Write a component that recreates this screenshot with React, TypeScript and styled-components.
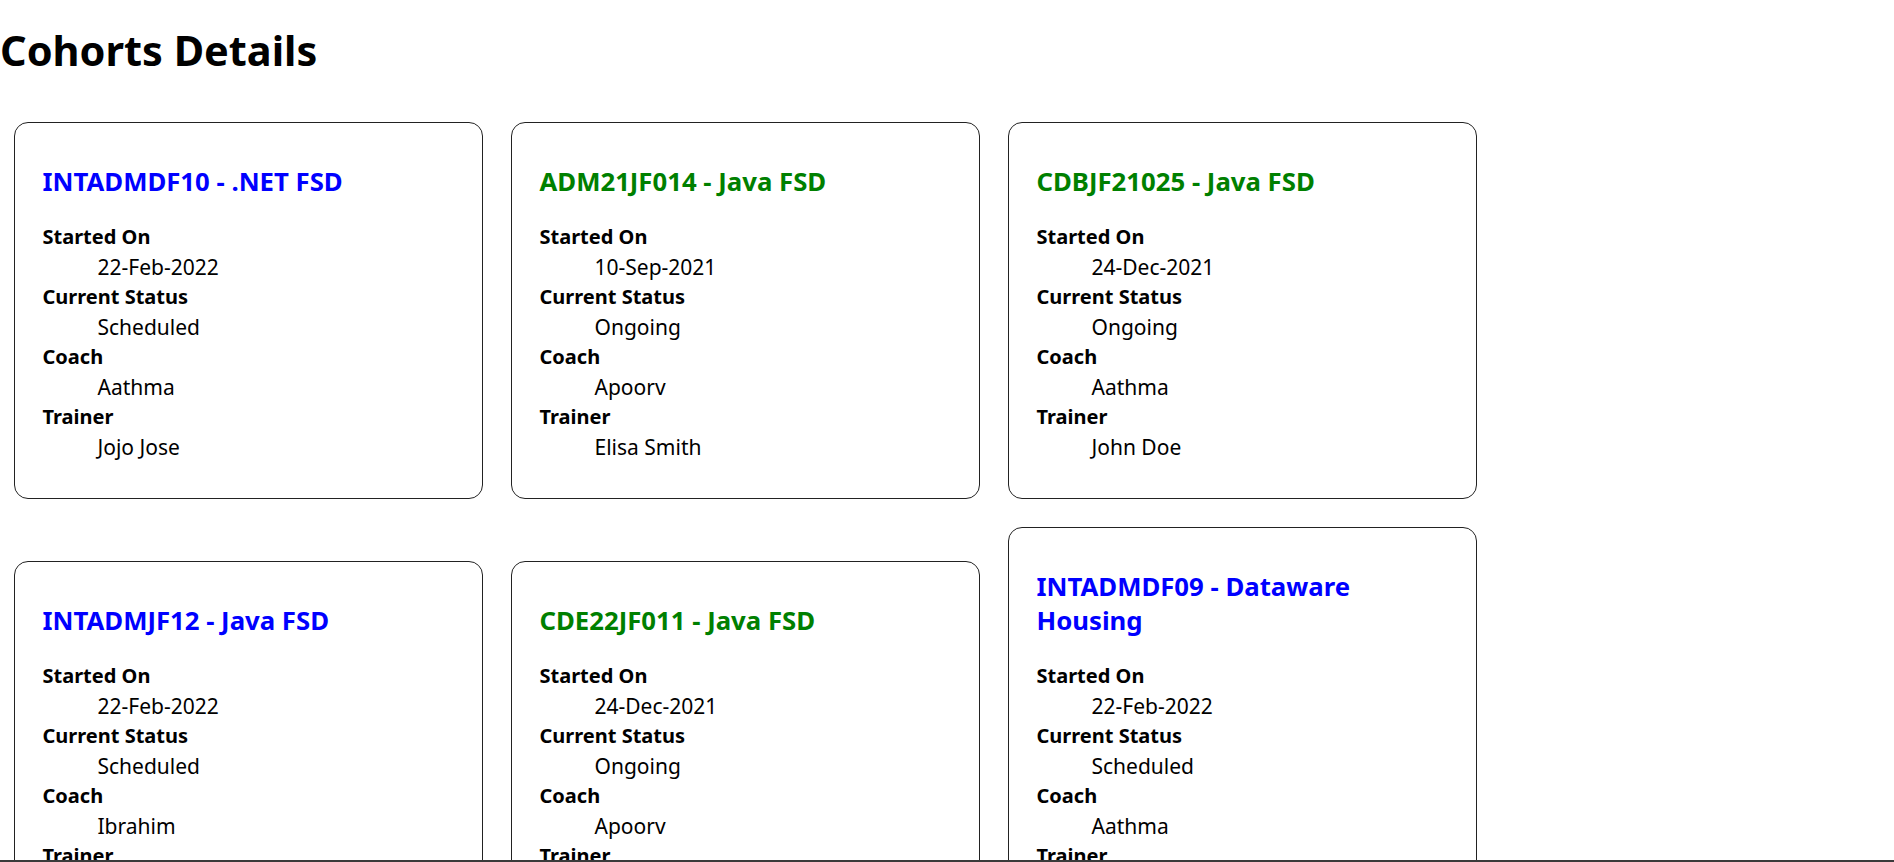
import React from 'react';
import styled, { createGlobalStyle } from 'styled-components';

const GlobalStyle = createGlobalStyle`
  body {
    margin: 0;
    background: #fff;
    color: #000;
    font-family: "Noto Sans", "Open Sans", sans-serif;
    font-size: 22px;
  }
`;

const Page = styled.div`
  >h1 {
    font-size: 41.5px;
    line-height: 59px;
    font-weight: 700;
    margin: 21px 0 28px 0;
  }
`;

const CardList = styled.div`
  display: flex;
  flex-wrap: wrap;
  align-items: last baseline;
  gap: 28px;
  padding: 14px;
`;

const Card = styled.div`
  width: 469px;
  box-sizing: border-box;
  border: 1px solid #222;
  border-radius: 14px;
  padding: 13.75px 27.5px;
  >h3 {
    font-size: 25.74px;
    line-height: 34px;
    margin: 27.2px 0 24.2px 0;
    padding-right: 8px;
  }
`;

const Title = styled.h3<{ $status: string }>`
  color: ${(p) => (p.$status === 'Ongoing' ? 'green' : 'blue')};
`;

const Details = styled.dl`
  margin: 0 0 22px 0;
  line-height: 30px;
  >dt {
    font-weight: 700;
    font-size: 20px;
  }
  >dd {
    margin-left: 55px;
    font-size: 21px;
  }
`;

interface ICohort {
  code: string;
  tech: string;
  started: string;
  status: string;
  coach: string;
  trainer: string;
}

const cohorts: ICohort[] = [
  { code: 'INTADMDF10', tech: '.NET FSD', started: '22-Feb-2022', status: 'Scheduled', coach: 'Aathma', trainer: 'Jojo Jose' },
  { code: 'ADM21JF014', tech: 'Java FSD', started: '10-Sep-2021', status: 'Ongoing', coach: 'Apoorv', trainer: 'Elisa Smith' },
  { code: 'CDBJF21025', tech: 'Java FSD', started: '24-Dec-2021', status: 'Ongoing', coach: 'Aathma', trainer: 'John Doe' },
  { code: 'INTADMJF12', tech: 'Java FSD', started: '22-Feb-2022', status: 'Scheduled', coach: 'Ibrahim', trainer: 'Jojo Jose' },
  { code: 'CDE22JF011', tech: 'Java FSD', started: '24-Dec-2021', status: 'Ongoing', coach: 'Apoorv', trainer: 'Elisa Smith' },
  { code: 'INTADMDF09', tech: 'Dataware Housing', started: '22-Feb-2022', status: 'Scheduled', coach: 'Aathma', trainer: 'John Doe' },
];

const BottomEdge = styled.div`
  position: fixed;
  left: 0;
  right: 0;
  bottom: 0;
  height: 2px;
  background: #3a3a3a;
`;

function CohortCard(props: { item: ICohort }) {
  const { item } = props;
  return (
    <Card>
      <Title $status={item.status}>{item.code} - {item.tech}</Title>
      <Details>
        <dt>Started On</dt>
        <dd>{item.started}</dd>
        <dt>Current Status</dt>
        <dd>{item.status}</dd>
        <dt>Coach</dt>
        <dd>{item.coach}</dd>
        <dt>Trainer</dt>
        <dd>{item.trainer}</dd>
      </Details>
    </Card>
  );
}

function App() {
  return (
    <Page>
      <GlobalStyle />
      <h1>Cohorts Details</h1>
      <CardList>
        {cohorts.map((c) => (
          <CohortCard key={c.code} item={c} />
        ))}
      </CardList>
      <BottomEdge />
    </Page>
  );
}

export default App;
